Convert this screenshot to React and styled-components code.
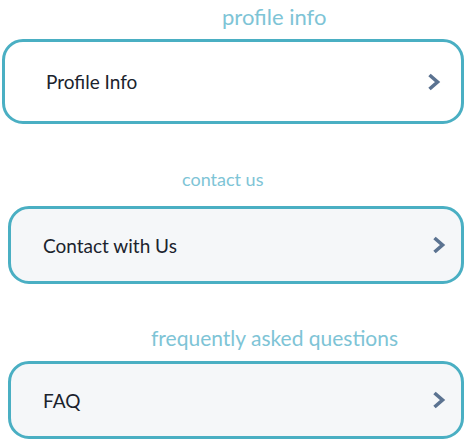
import React from 'react';
import styled, { createGlobalStyle } from 'styled-components';

const GlobalStyle = createGlobalStyle`
  html, body {
    margin: 0;
    padding: 0;
    background: #ffffff;
  }
  body {
    font-family: Lato, "Open Sans", sans-serif;
  }
`;

const Page = styled.div`
  width: 465px;
  height: 441px;
  overflow: hidden;
  display: flex;
  flex-direction: column;
`;

const Section = styled.section`
  display: flex;
  flex-direction: column;
  margin-top: ${(p) => p.$top}px;
`;

const Label = styled.div`
  padding-left: ${(p) => p.$left}px;
  font-size: ${(p) => p.$size}px;
  line-height: 30px;
  color: #7ec4d6;
`;

const Card = styled.div`
  box-sizing: border-box;
  margin-top: ${(p) => p.$gap}px;
  margin-left: ${(p) => p.$left}px;
  width: ${(p) => 464 - p.$left}px;
  height: ${(p) => p.$height}px;
  border: 3.5px solid #4aafc3;
  border-radius: 21px;
  background: ${(p) => (p.$muted ? '#f5f7f9' : '#ffffff')};
  display: flex;
  align-items: center;
  justify-content: space-between;
  padding: 0 ${(p) => p.$right}px 0 ${(p) => p.$pad}px;
`;

const Title = styled.span`
  font-size: 19px;
  color: #1b232d;
`;

const Chevron = () => (
  <svg width="14" height="18" viewBox="0 0 14 18">
    <polyline
      points="2.5,2 10.5,9 2.5,16"
      fill="none"
      stroke="#5b7391"
      strokeWidth="3.6"
    />
  </svg>
);

const items = [
  { label: 'profile info', labelLeft: 222, labelSize: 22, top: 2, gap: 7, left: 2, height: 85, pad: 41, right: 20, title: 'Profile Info', muted: false },
  { label: 'contact us', labelLeft: 182, labelSize: 18, top: 40, gap: 12, left: 8, height: 78, pad: 32, right: 15, title: 'Contact with Us', muted: true },
  { label: 'frequently asked questions', labelLeft: 151, labelSize: 21, top: 39, gap: 8, left: 8, height: 78, pad: 32, right: 15, title: 'FAQ', muted: true },
];

export default function App() {
  return (
    <Page>
      <GlobalStyle />
      {items.map((it) => (
        <Section key={it.title} $top={it.top}>
          <Label $left={it.labelLeft} $size={it.labelSize}>{it.label}</Label>
          <Card $gap={it.gap} $left={it.left} $height={it.height} $muted={it.muted} $pad={it.pad} $right={it.right}>
            <Title>{it.title}</Title>
            <Chevron />
          </Card>
        </Section>
      ))}
    </Page>
  );
}
